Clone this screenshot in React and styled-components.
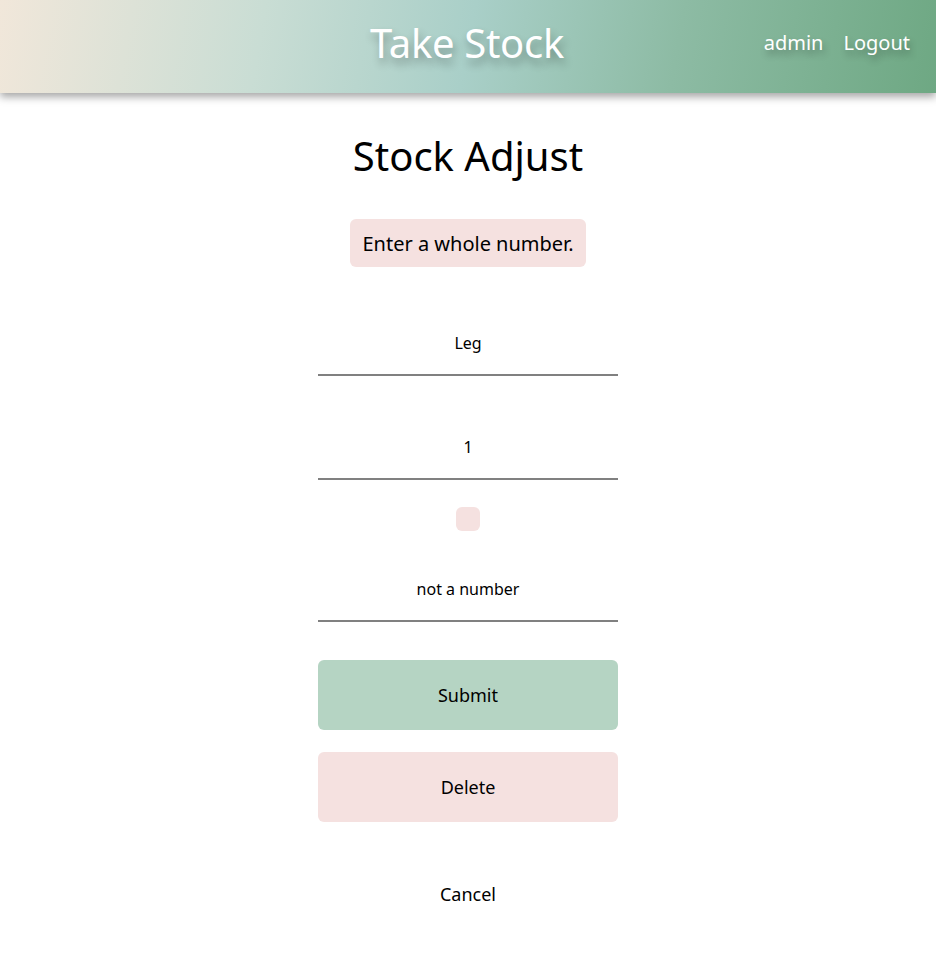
import React from "react";
import styled, { createGlobalStyle } from "styled-components";

const GlobalStyle = createGlobalStyle`
	body {
		margin: 0;
		background: #ffffff;
		font-family: "Noto Sans", "Open Sans", sans-serif;
		color: #000000;
	}
`;

const Header = styled.header`
	height: 93px;
	box-sizing: border-box;
	display: grid;
	grid-template-columns: 1fr auto 1fr;
	align-items: center;
	padding: 0 26px 8px 20px;
	background: linear-gradient(100deg, #f1e7da 0%, #c9ddd4 28%, #a9cfc8 50%, #8dbba4 72%, #6ea883 100%);
	box-shadow: 0 4px 8px rgba(0, 0, 0, 0.35);
	position: relative;
`;

const Brand = styled.h2`
	grid-column: 2;
	margin: 0 0 0 4px;
	font-size: 40px;
	font-weight: 400;
	color: #ffffff;
	text-shadow: 2px 6px 8px rgba(0, 0, 0, 0.3);
	letter-spacing: -0.3px;
`;

const Nav = styled.nav`
	grid-column: 3;
	justify-self: end;
	display: flex;
	gap: 20px;
	font-size: 20px;
	color: #ffffff;
	text-shadow: 2px 5px 7px rgba(0, 0, 0, 0.3);
`;

const Main = styled.main`
	display: flex;
	flex-direction: column;
	align-items: center;
	padding-top: 37px;
`;

const Title = styled.h1`
	margin: 0;
	font-size: 40px;
	font-weight: 400;
	line-height: 1.3;
`;

const ErrorBox = styled.div`
	margin-top: 37px;
	padding: 0 12px;
	height: 48px;
	display: flex;
	align-items: center;
	background: #f5e1e0;
	border-radius: 6px;
	font-size: 20px;
`;

const Form = styled.form`
	width: 300px;
	display: flex;
	flex-direction: column;
	margin-top: 45px;
`;

const Field = styled.input`
	width: 100%;
	box-sizing: border-box;
	height: 64px;
	padding: 0;
	border: 0;
	border-bottom: 2px solid #808080;
	background: transparent;
	text-align: center;
	font-family: inherit;
	font-size: 16px;
	color: #000000;
	margin-top: ${({ $gap }) => $gap || 0}px;
	outline: none;
`;

const FieldError = styled.span`
	align-self: center;
	width: 24px;
	height: 24px;
	margin-top: 27px;
	background: #f5e1e0;
	border-radius: 6px;
`;

const Button = styled.button`
	height: 70px;
	border: 0;
	border-radius: 6px;
	background: ${({ $bg }) => $bg};
	font-family: inherit;
	font-size: 18px;
	color: #000000;
	margin-top: ${({ $gap }) => $gap}px;
`;

const Cancel = styled.a`
	margin-top: 60px;
	font-size: 18px;
	color: #000000;
	text-align: center;
	text-decoration: none;
`;

export default function App() {
	return (
		<>
			<GlobalStyle />
			<Header>
				<Brand>Take Stock</Brand>
				<Nav>
					<span>admin</span>
					<span>Logout</span>
				</Nav>
			</Header>
			<Main>
				<Title>Stock Adjust</Title>
				<ErrorBox>Enter a whole number.</ErrorBox>
				<Form onSubmit={(e) => e.preventDefault()}>
					<Field defaultValue="Leg" />
					<Field defaultValue="1" $gap={40} />
					<FieldError />
					<Field defaultValue="not a number" $gap={27} />
					<Button type="submit" $bg="#b5d4c3" $gap={38}>
						Submit
					</Button>
					<Button type="button" $bg="#f5e1e0" $gap={22}>
						Delete
					</Button>
					<Cancel href="#">Cancel</Cancel>
				</Form>
			</Main>
		</>
	);
}
